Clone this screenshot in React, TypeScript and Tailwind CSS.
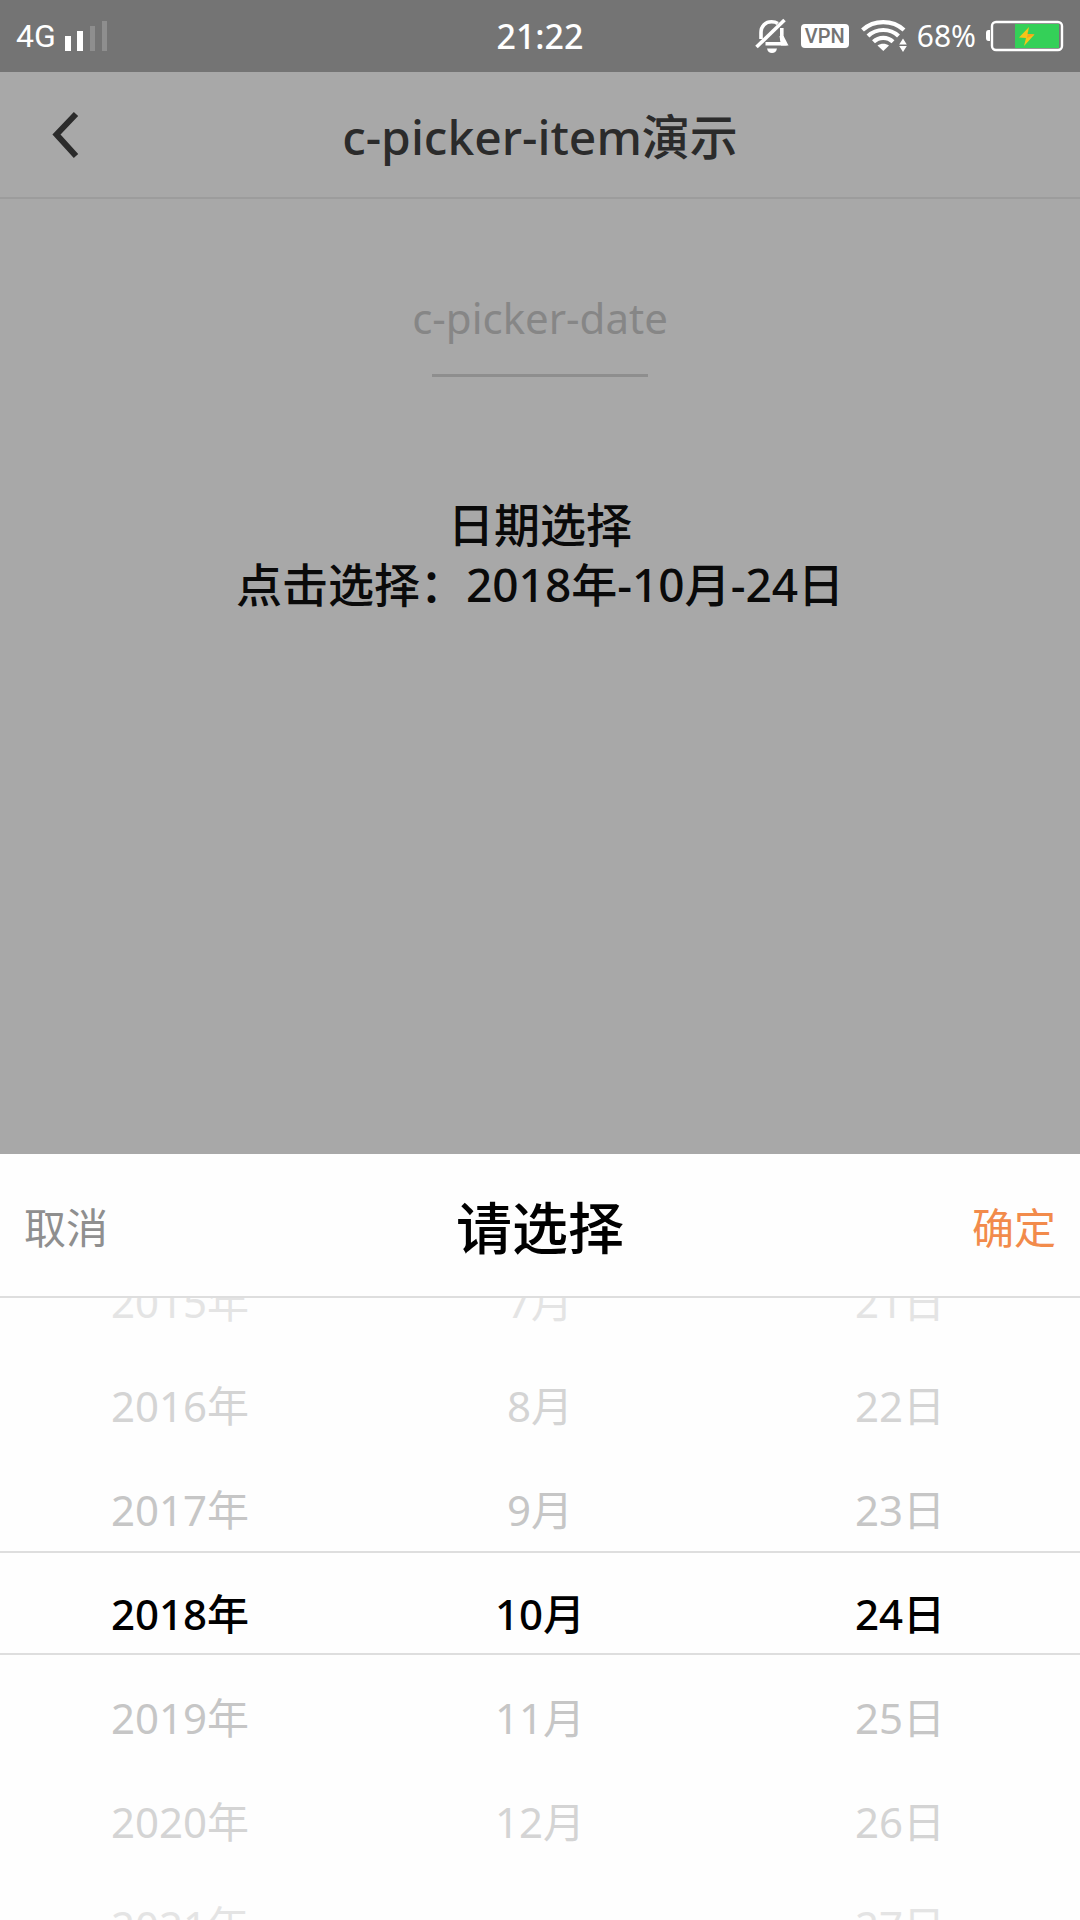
import { useState } from "react";

const YEARS = ["2015年", "2016年", "2017年", "2018年", "2019年", "2020年", "2021年"];
const MONTHS = ["7月", "8月", "9月", "10月", "11月", "12月"];
const DAYS = ["21日", "22日", "23日", "24日", "25日", "26日", "27日"];

function SignalIcon() {
  return (
    <svg width="44" height="32" viewBox="0 0 44 32" aria-hidden="true">
      <rect x="1" y="16" width="6" height="15" fill="#fff" />
      <rect x="13" y="11" width="6" height="20" fill="#fff" />
      <rect x="26" y="6" width="5" height="25" fill="#8e8e8e" />
      <rect x="38" y="1" width="5" height="30" fill="#8e8e8e" />
    </svg>
  );
}

function MutedBellIcon() {
  return (
    <svg width="36" height="36" viewBox="0 0 36 36" fill="none" stroke="#fff" strokeWidth="3.6" aria-hidden="true">
      <path d="M6 21V14.500C6 8 10.500 3.800 16.500 3.800C19 3.800 21 4.300 22.800 5.500" />
      <path d="M10.500 25.800H29L26.800 21V10" />
      <path d="M24.500 18H28.600L33.500 27.600H26Z" fill="#fff" stroke="none" />
      <path d="M1.500 29L29.500 2" />
      <path d="M12 30.500H22C21.500 33.500 19.500 35 17 35S12.500 33.500 12 30.500Z" fill="#fff" stroke="none" />
    </svg>
  );
}

function WifiIcon() {
  return (
    <svg width="48" height="36" viewBox="0 0 48 36" fill="none" stroke="#fff" strokeWidth="4.2" aria-hidden="true">
      <path d="M3.500 12C15 1.500 33.500 1.500 45 12" />
      <path d="M9 18C17.500 10 31 10 39.500 18" />
      <path d="M14.500 23.800C20 18.500 28.500 18.500 34 23.800" />
      <path d="M18.500 27.500C22 25 26.500 25 30 27.500L24.300 33Z" fill="#fff" stroke="none" />
      <path d="M44 20.500L47.800 26.500H40.200ZM44 34L40.200 28H47.800Z" fill="#fff" stroke="none" />
    </svg>
  );
}

function BatteryIcon() {
  return (
    <svg width="78" height="32" viewBox="0 0 78 32" aria-hidden="true">
      <path d="M4 10H2.500Q0 10 0 13V18Q0 21 2.500 21H4Z" fill="#fff" />
      <rect x="6" y="2" width="70" height="28" rx="4" fill="none" stroke="#fff" strokeWidth="2.400" />
      <rect x="29" y="4" width="44" height="24" fill="#34d058" />
      <path d="M43 7L33 17.500L40 18L38 26L48.500 14.500L41.500 14Z" fill="#f5c518" />
      <path d="M43 7L41.500 14L48.500 14.500L41 18Z" fill="#ff9f1a" />
    </svg>
  );
}

function StatusBar() {
  return (
    <div className="grid h-[72px] grid-cols-3 items-center bg-[#747474] text-white">
      <div className="flex items-center gap-2 pl-4">
        <span className="font-[Roboto,sans-serif] text-[32px] leading-none">4G</span>
        <SignalIcon />
      </div>
      <time className="text-center text-[34px] leading-none font-medium">21:22</time>
      <div className="flex items-center justify-end gap-2.5 pr-4">
        <MutedBellIcon />
        <span className="flex h-6 w-12 items-center justify-center rounded bg-white font-[Roboto,sans-serif] text-xl leading-none font-medium text-[#747474]">
          VPN
        </span>
        <WifiIcon />
        <span className="text-[30px] leading-none">68%</span>
        <BatteryIcon />
      </div>
    </div>
  );
}

type WheelProps = {
  label: string;
  items: string[];
  value: string;
  onChange: (value: string) => void;
};

function Wheel({ label, items, value, onChange }: WheelProps) {
  const current = items.indexOf(value);
  const tone = (index: number) => {
    const distance = Math.abs(index - current);
    if (distance === 0) return "text-black font-medium";
    if (distance === 1) return "text-[#c6c6c6]";
    if (distance === 2) return "text-[#d4d4d4]";
    return "text-[#e4e4e4]";
  };

  return (
    <ul aria-label={label} className="-mt-12 flex-1">
      {items.map((item, index) => (
        <li key={item}>
          <button
            type="button"
            aria-pressed={item === value}
            onClick={() => onChange(item)}
            className={`block h-[104px] w-full text-center text-[42px] leading-[104px] ${tone(index)}`}
          >
            {item}
          </button>
        </li>
      ))}
    </ul>
  );
}

export default function App() {
  const [year, setYear] = useState("2018年");
  const [month, setMonth] = useState("10月");
  const [day, setDay] = useState("24日");

  return (
    <div className="flex min-h-screen flex-col bg-[#a8a8a8] font-['Noto_Sans','Noto_Sans_CJK_SC',sans-serif]">
      <StatusBar />

      <header className="grid h-[127px] grid-cols-[1fr_auto_1fr] items-center border-b-2 border-[#9c9c9c] pt-1">
        <button type="button" aria-label="返回" className="justify-self-start pt-3 pr-4 pb-4 pl-[50px]">
          <svg width="30" height="48" viewBox="0 0 30 48" fill="none" stroke="#2b2b2b" strokeWidth="6" aria-hidden="true">
            <path d="M26 3L6.500 23.500L26 45" />
          </svg>
        </button>
        <h1 className="text-5xl font-medium text-[#2b2b2b]">c-picker-item演示</h1>
      </header>

      <main className="flex flex-1 flex-col items-center pt-[89px]">
        <h2 className="text-[42px] leading-[60px] text-[#868686]">c-picker-date</h2>
        <div className="mt-[26px] h-[3px] w-1/5 bg-[#8e8e8e]" />
        <div className="mt-[117px] text-center text-[46px] leading-[60px] font-medium text-[#0a0a0a]">
          <p>日期选择</p>
          <button type="button" className="block">
            点击选择：{year}-{month}-{day}
          </button>
        </div>
      </main>

      <section role="dialog" aria-label="请选择" className="bg-[#fefefe]">
        <div className="grid h-36 grid-cols-[1fr_auto_1fr] items-center border-b-2 border-[#dedede] px-6 pt-1">
          <button type="button" className="justify-self-start text-[42px] text-[#8f8f8f]">
            取消
          </button>
          <h3 className="text-[56px] font-medium text-black">请选择</h3>
          <button type="button" className="justify-self-end text-[42px] text-[#f28b4b]">
            确定
          </button>
        </div>
        <div className="relative flex h-[622px] overflow-hidden">
          <Wheel label="年" items={YEARS} value={year} onChange={setYear} />
          <Wheel label="月" items={MONTHS} value={month} onChange={setMonth} />
          <Wheel label="日" items={DAYS} value={day} onChange={setDay} />
          <div className="pointer-events-none absolute inset-x-0 top-[253px] h-26 border-y-2 border-[#dedede]" />
        </div>
      </section>
    </div>
  );
}
